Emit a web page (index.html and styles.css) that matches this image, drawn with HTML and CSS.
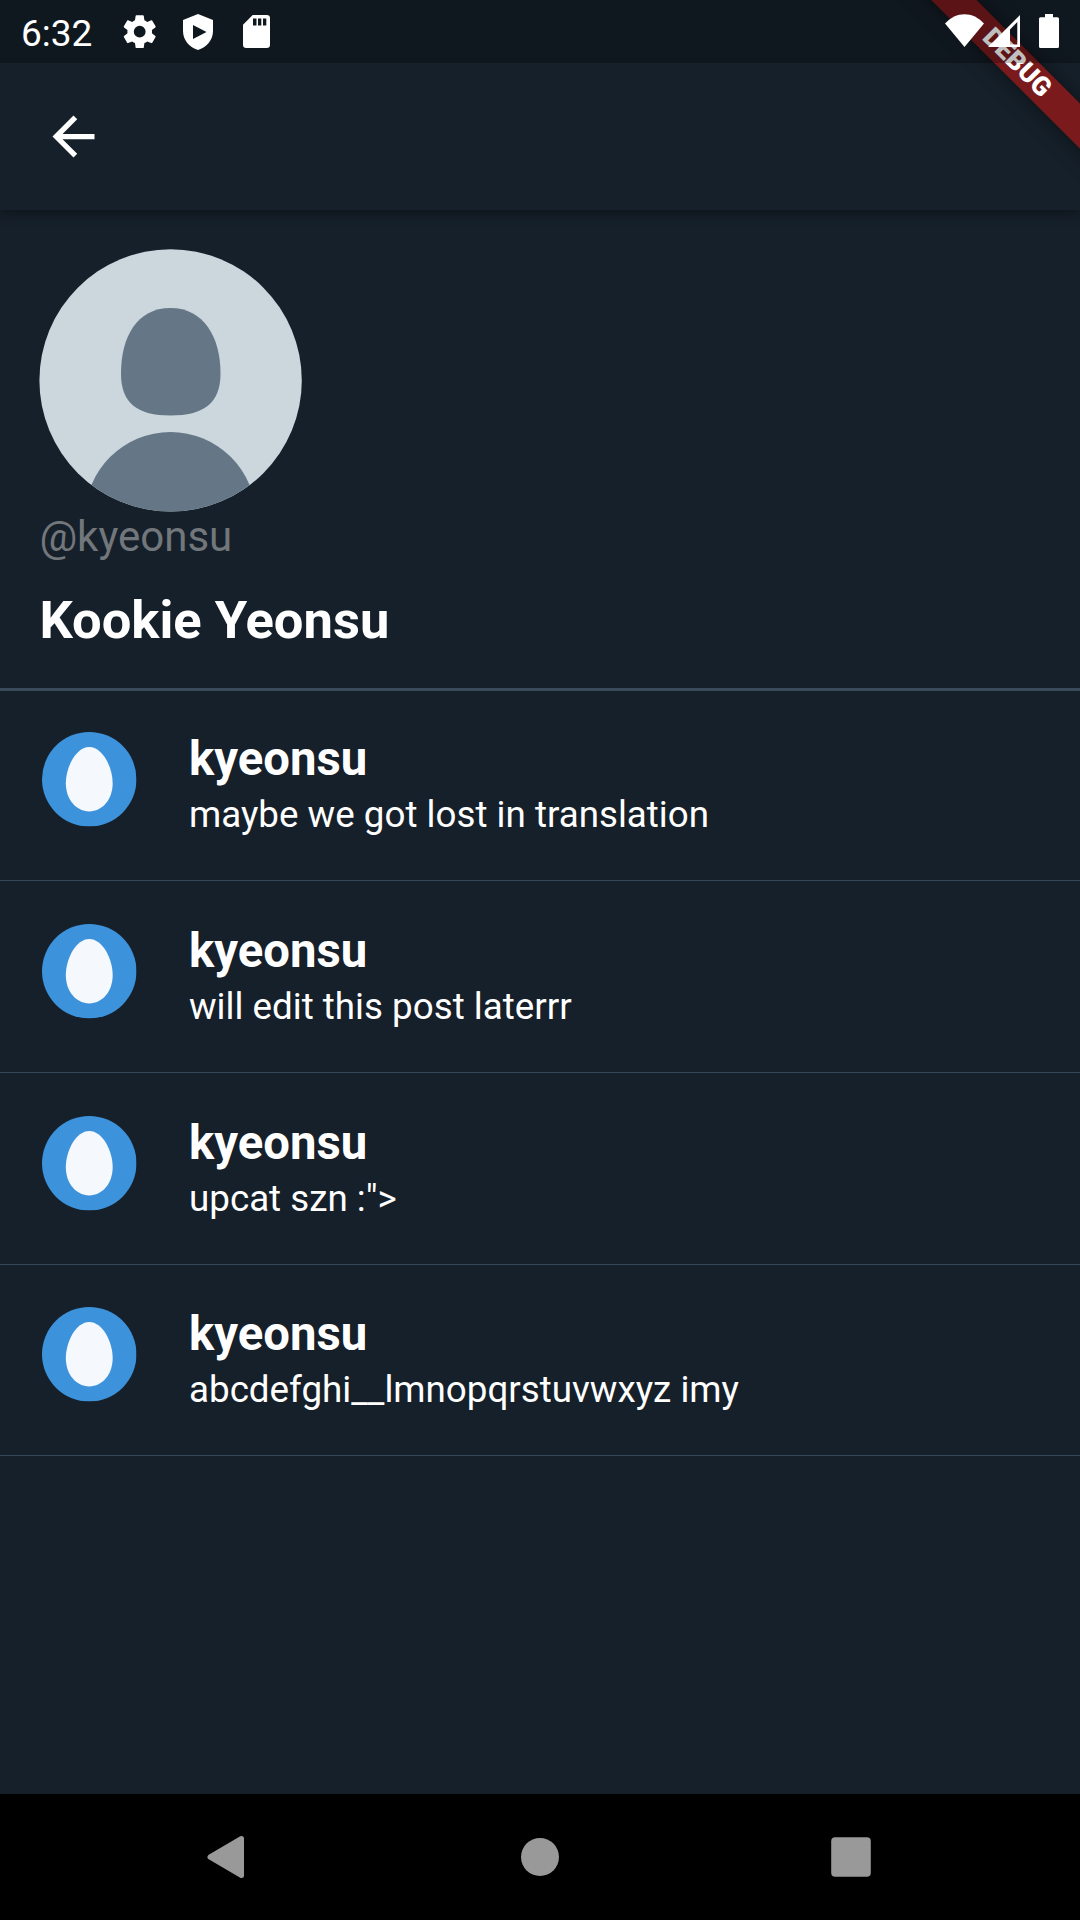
FILE: index.html
```html
<!DOCTYPE html>
<html lang="en">
<head>
<meta charset="utf-8">
<title>Kookie Yeonsu</title>
<link rel="stylesheet" href="styles.css">
</head>
<body>
<svg class="defs" aria-hidden="true">
  <symbol id="egg" viewBox="0 0 94 94">
    <circle cx="47" cy="47" r="47" fill="#3c93db"/>
    <path d="M47 15C60 15 70.3 34.500 70.300 51C70.300 67 60 79 47 79C34 79 23.700 67 23.700 51C23.700 34.500 34 15 47 15Z" fill="#f5f8fc"/>
  </symbol>
</svg>
<div class="screen">
  <div class="status">
    <span class="clock">6:32</span>
    <svg class="gear" viewBox="0 0 24 24"><path d="M19.430 12.980c.04-.32.07-.64.07-.98s-.03-.66-.07-.98l2.110-1.650c.19-.15.24-.42.12-.64l-2-3.460c-.12-.22-.39-.3-.61-.22l-2.490 1c-.52-.4-1.080-.73-1.690-.98l-.38-2.650C14.460 2.180 14.250 2 14 2h-4c-.25 0-.46.18-.49.42l-.38 2.650c-.61.25-1.170.59-1.690.98l-2.490-1c-.23-.09-.49 0-.61.22l-2 3.460c-.13.22-.07.49.12.64l2.110 1.650c-.04.32-.07.65-.07.98s.03.66.07.98l-2.110 1.650c-.19.15-.24.42-.12.64l2 3.460c.12.22.39.3.61.22l2.490-1c.52.4 1.080.73 1.690.98l.38 2.650c.03.24.24.42.49.42h4c.25 0 .46-.18.49-.42l.38-2.650c.61-.25 1.170-.59 1.690-.98l2.490 1c.23.09.49 0 .61-.22l2-3.460c.12-.22.07-.49-.12-.64zM12 15.600a3.600 3.600 0 1 1 0-7.200 3.600 3.600 0 0 1 0 7.200z"/></svg>
    <svg class="shield" viewBox="0 0 30 36"><path fill-rule="evenodd" d="M15 0L30 6V17C30 26 23.500 33.500 15 36C6.500 33.500 0 26 0 17V6ZM10 11V25L23.500 18Z"/></svg>
    <svg class="card" viewBox="0 0 27 33"><path fill-rule="evenodd" d="M9.700 0H23.700Q27 0 27 3.300V29.700Q27 33 23.700 33H3.300Q0 33 0 29.700V9.700ZM10 3.500V10.500H13.500V3.500ZM15 3.500V10.500H18.300V3.500ZM20 3.500V10.500H23.300V3.500Z"/></svg>
    <span class="spacer"></span>
    <svg class="wifi" viewBox="0 0 39 33"><path d="M0 9.500C11 -3 28 -3 39 9.500L19.500 33Z"/></svg>
    <svg class="signal" viewBox="0 0 32 32"><path fill-rule="evenodd" d="M32 0V32H0ZM29.300 7L22 14.500V29.500H29.300Z"/></svg>
    <svg class="battery" viewBox="0 0 20 34"><path d="M6 0H14V3.300H18.500Q20 3.300 20 4.800V32.500Q20 34 18.500 34H1.500Q0 34 0 32.500V4.800Q0 3.300 1.500 3.300H6Z"/></svg>
  </div>
  <header class="appbar">
    <svg class="back" viewBox="0 0 24 24"><path d="M20 11H7.830l5.590-5.590L12 4l-8 8 8 8 1.410-1.410L7.830 13H20v-2z"/></svg>
  </header>
  <section class="profile">
    <svg class="portrait" viewBox="0 0 263 263">
      <clipPath id="round"><circle cx="131.600" cy="131.400" r="131.200"/></clipPath>
      <g clip-path="url(#round)">
        <path d="M0 0H263V263H0Z" fill="#ccd6dd"/>
        <path d="M131.500 59C165 59 181.500 88.500 181.500 124.500C181.500 154.500 164.500 166.500 131.500 166.500C98.500 166.500 82 154.500 82 124.500C82 88.500 97.500 59 131.500 59Z" fill="#657786"/>
        <circle cx="131.500" cy="268.500" r="85.500" fill="#657786"/>
      </g>
    </svg>
    <div class="handle">@kyeonsu</div>
    <h1 class="name">Kookie Yeonsu</h1>
  </section>
  <main class="posts">
    <article class="post"><svg class="egg"><use href="#egg"/></svg><div><h2 class="author">kyeonsu</h2><p class="text">maybe we got lost in translation</p></div></article>
    <article class="post"><svg class="egg"><use href="#egg"/></svg><div><h2 class="author">kyeonsu</h2><p class="text">will edit this post laterrr</p></div></article>
    <article class="post"><svg class="egg"><use href="#egg"/></svg><div><h2 class="author">kyeonsu</h2><p class="text">upcat szn :"&gt;</p></div></article>
    <article class="post"><svg class="egg"><use href="#egg"/></svg><div><h2 class="author">kyeonsu</h2><p class="text">abcdefghi__lmnopqrstuvwxyz imy</p></div></article>
  </main>
  <nav class="navbar">
    <svg class="key" viewBox="0 0 42 42"><path d="M2 21L33.500 2.500V39.500Z" stroke="#999" stroke-width="5" stroke-linejoin="round"/></svg>
    <svg class="key" viewBox="0 0 42 42"><circle cx="21" cy="21" r="19"/></svg>
    <svg class="key" viewBox="0 0 42 42"><rect x="1.200" y="1.200" width="39.600" height="39.600" rx="4"/></svg>
  </nav>
  <div class="ribbon">DEBUG</div>
</div>
</body>
</html>
```
FILE: styles.css
```css
* { box-sizing: border-box; }
body { margin: 0; background: #16202a; font-family: Roboto, sans-serif; color: #fff; }
h1, h2, p { margin: 0; }
.defs { display: none; }
.screen { position: relative; width: 1080px; height: 1920px; overflow: hidden; display: flex; flex-direction: column; background: #16202a; }

.status { position: relative; z-index: 3; flex: none; height: 63px; display: flex; align-items: flex-start; padding: 0 21px; background: rgba(0, 0, 0, .25); fill: #fff; }
.clock { width: 98px; margin-top: 12px; font-size: 37px; line-height: 43px; }
.gear { width: 39.400px; height: 39.400px; margin: 12px 0 0 1.300px; }
.shield { width: 30px; height: 36px; margin: 13.600px 0 0 23.400px; }
.card { width: 27px; height: 33px; margin: 15px 0 0 29.700px; }
.spacer { flex: 1; }
.wifi { width: 39px; height: 33px; margin-top: 14px; }
.signal { width: 32px; height: 32px; margin: 15px 0 0 4px; }
.battery { width: 20px; height: 34px; margin: 14px 0 0 19px; }

.appbar { position: relative; z-index: 1; flex: none; height: 147px; display: flex; align-items: center; padding-left: 42px; background: #16202a; box-shadow: 0 5px 10px rgba(0, 0, 0, .32); }
.back { width: 63px; height: 63px; fill: #fff; }

.profile { flex: none; height: 481px; padding: 39px 39.400px 0; border-bottom: 3px solid #3b4b5c; }
.portrait { display: block; width: 263px; height: 263px; }
.handle { font-size: 42px; line-height: 49px; color: #72777c; }
.name { margin-top: 28px; font-size: 52.500px; line-height: 62px; font-weight: 700; }

.posts { flex: 1; margin-top: -1.200px; }
.post { display: flex; gap: 52.500px; height: 191.625px; padding: 42.500px 42px 0; border-bottom: 1px solid #35465a; }
.egg { flex: none; width: 94.500px; height: 94.500px; overflow: visible; }
.author { font-size: 47.250px; line-height: 55px; font-weight: 700; }
.text { margin-top: 6px; font-size: 36.750px; line-height: 43px; }

.navbar { flex: none; height: 126px; display: flex; justify-content: center; align-items: center; gap: 269px; background: #000; fill: #999; }
.key { width: 42px; height: 42px; overflow: visible; }

.ribbon { position: absolute; z-index: 2; left: 807px; top: 47.400px; width: 420px; height: 31.500px; transform: rotate(45deg); background: #7a1a1d; box-shadow: 0 0 20px rgba(0, 0, 0, .5); font-size: 26.400px; font-weight: 900; line-height: 31.500px; text-align: center; }
```
